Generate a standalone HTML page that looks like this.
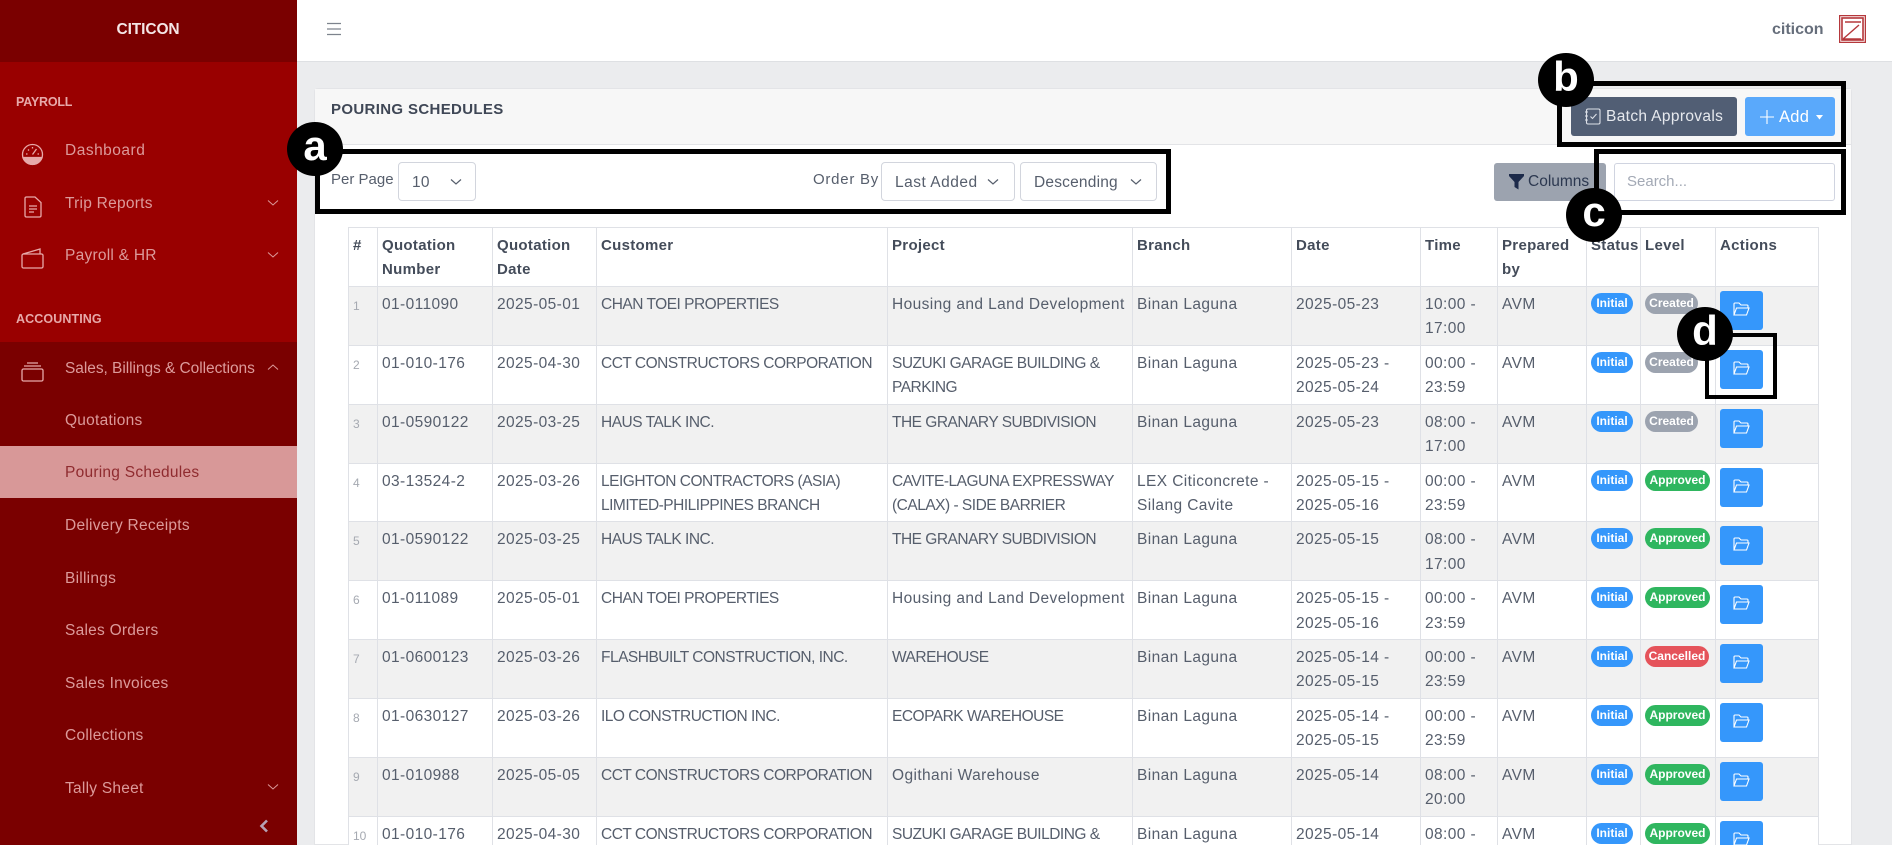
<!DOCTYPE html>
<html style="height:845px;overflow:hidden"><head><meta charset="utf-8"><title>Pouring Schedules</title>
<style>
*{box-sizing:border-box}
html,body{margin:0;padding:0}
body{width:1892px;height:845px;overflow:hidden;background:#ebecee;font-family:"Liberation Sans",sans-serif;color:#565e6c}
#wrap{position:absolute;left:0;top:0;width:1892px;height:845px;overflow:hidden;background:#ebecee}
.a{position:absolute}
.t{position:absolute;white-space:nowrap;line-height:20px}
#side{left:0;top:0;width:297px;height:845px;background:#7a0000;overflow:hidden}
.st{position:absolute;left:65px;font-size:15.5px;letter-spacing:.25px;color:#dc9a9a;line-height:20px;white-space:nowrap}
.sh{position:absolute;left:16px;font-size:12.5px;font-weight:bold;color:#e7a9a9;line-height:16px}
.chev{position:absolute;left:266px}
table{border-collapse:collapse;table-layout:fixed;width:1470px;position:absolute;left:348px;top:227px;font-size:15.5px;letter-spacing:.4px;color:#565e6c;background:#fff}
td,th{border:1px solid #dfe1e6;padding:6px 4px 0;vertical-align:top;line-height:24.4px;text-align:left;overflow:hidden}
th{height:59px;color:#444c5a;font-size:15px;letter-spacing:.3px;font-weight:bold}
td{height:58.85px}
td.u{letter-spacing:-.5px}
tr:nth-child(even) td{background:#f1f1f1}
td.n{font-size:12px;letter-spacing:0;color:#a5a9b1;padding-top:7px}
.b{display:inline-block;height:21px;line-height:20px;border-radius:11px;color:#fff;font-size:12px;letter-spacing:0;font-weight:bold;text-align:center;vertical-align:top}
.i{width:42px;background:#3597fb}.cr{width:53px;background:#9ca3af}.ap{width:65px;background:#2fb65f}.ca{width:64px;background:#e5535a}
.f{display:block;width:43px;height:39px;background:#3597fb;border-radius:3px;position:relative}
.f svg{position:absolute;left:13px;top:11px}
td.act{padding:4px 0 0 4px}
.sel{position:absolute;background:#fff;border:1px solid #d2d5dd;border-radius:4px;height:39px;font-size:15.5px;letter-spacing:.2px;line-height:40px;color:#565e6c;padding-left:13px;white-space:nowrap}
.sel svg{position:absolute;top:15px}
.bx{position:absolute;border:5px solid #000}
.c{position:absolute;background:#000;border-radius:50%;width:56px;height:54px;color:#fff;font-weight:bold;font-size:42px;text-align:center;line-height:48px}
</style></head><body>
<svg width="0" height="0" style="position:absolute"><defs><symbol id="fo" viewBox="0 0 17 15"><path d="M1 13V2Q1 1 2 1H6L8 3H14Q15 3 15 4V6M1 13L3.500 6H16L13.500 13Z" fill="none" stroke="#fff" stroke-width="1.100"/></symbol></defs></svg>
<div id="wrap">

<div class="a" style="left:297px;top:0;width:1595px;height:62px;background:#fff;border-bottom:1px solid #dee0e3"></div>
<svg class="a" style="left:327px;top:22px" width="14" height="14" fill="none" stroke="#7d838d" stroke-width="1.200"><path d="M0 1.500H14M0 7H14M0 12.500H14"/></svg>
<div class="t" style="left:1772px;top:20px;font-size:16px;font-weight:bold;color:#666e7b">citicon</div>
<svg class="a" style="left:1839px;top:15px" width="27" height="28" fill="none" stroke="#b5383c" stroke-width="1.200"><rect x=".6" y=".6" width="25.800" height="26.800" fill="#f9e9e9"/><rect x="3" y="3" width="21" height="22" fill="#fff" stroke-width="1.600"/><path d="M4 24L20 10M6 7H22M4 24H22" stroke-width="1.400"/></svg>

<div id="side" class="a">
 <div class="a" style="left:0;top:62px;width:297px;height:280px;background:#990000"></div>
 <div class="t" style="left:0;width:296px;text-align:center;top:20px;font-size:15.5px;font-weight:bold;letter-spacing:-.1px;color:#f5e6e6">CITICON</div>
 <div class="sh" style="top:94px;letter-spacing:-.2px">PAYROLL</div>
 <svg class="a" style="left:21px;top:143px" width="23" height="23" viewBox="0 0 23 23" fill="none" stroke="#e7a9a9" stroke-width="1.300"><circle cx="11.500" cy="11.500" r="10"/><path d="M2 14.500H21A10 10 0 0 1 2 14.500Z" fill="#e7a9a9"/><path d="M11.500 11.500L15.500 6M5 11H6.500M16.500 11H18M7 6.500L8 7.500M11.500 4V5.500"/></svg>
 <div class="st" style="top:141px;letter-spacing:.5px">Dashboard</div>
 <svg class="a" style="left:24px;top:196px" width="18" height="22" viewBox="0 0 18 22" fill="none" stroke="#e7a9a9" stroke-width="1.300"><path d="M1 2.500Q1 1 2.500 1H11L17 6.500V19.500Q17 21 15.500 21H2.500Q1 21 1 19.500Z"/><path d="M5 10H13M5 13H13M5 16H10"/></svg>
 <div class="st" style="top:194px">Trip Reports</div>
 <svg class="chev" style="top:199px" width="14" height="8" fill="none" stroke="#dc9a9a" stroke-width="1"><path d="M2 1.500L7 6L12 1.500"/></svg>
 <svg class="a" style="left:21px;top:248px" width="23" height="21" viewBox="0 0 23 21" fill="none" stroke="#e7a9a9" stroke-width="1.300"><rect x="1" y="6" width="21" height="14" rx="1.500"/><path d="M2 6L19 1V6"/></svg>
 <div class="st" style="top:246px">Payroll &amp; HR</div>
 <svg class="chev" style="top:251px" width="14" height="8" fill="none" stroke="#dc9a9a" stroke-width="1"><path d="M2 1.500L7 6L12 1.500"/></svg>
 <div class="sh" style="top:311px;letter-spacing:.1px">ACCOUNTING</div>
 <svg class="a" style="left:21px;top:361px" width="23" height="21" viewBox="0 0 23 21" fill="none" stroke="#e7a9a9" stroke-width="1.300"><rect x="1" y="8" width="21" height="12" rx="1.500"/><path d="M3 5H20M6 2H17"/></svg>
 <div class="st" style="top:359px;letter-spacing:-.05px">Sales, Billings &amp; Collections</div>
 <svg class="chev" style="top:363px" width="14" height="8" fill="none" stroke="#dc9a9a" stroke-width="1"><path d="M2 6.500L7 2L12 6.500"/></svg>
 <div class="st" style="top:411px">Quotations</div>
 <div class="a" style="left:0;top:446px;width:297px;height:52px;background:#d89898"></div>
 <div class="st" style="top:463px;color:#8f2b2f">Pouring Schedules</div>
 <div class="st" style="top:516px">Delivery Receipts</div>
 <div class="st" style="top:569px">Billings</div>
 <div class="st" style="top:621px">Sales Orders</div>
 <div class="st" style="top:674px">Sales Invoices</div>
 <div class="st" style="top:726px">Collections</div>
 <div class="st" style="top:779px">Tally Sheet</div>
 <svg class="chev" style="top:783px" width="14" height="8" fill="none" stroke="#dc9a9a" stroke-width="1"><path d="M2 1.500L7 6L12 1.500"/></svg>
 <svg class="a" style="left:259px;top:819px" width="10" height="14" fill="none" stroke="#b6a2b5" stroke-width="2.600"><path d="M8 1.500L2.500 7L8 12.500"/></svg>
</div>

<div class="a" style="left:314px;top:88px;width:1538px;height:757px;background:#fff;border:1px solid #e3e4e7;border-radius:4px 4px 0 0"></div>
<div class="a" style="left:315px;top:89px;width:1536px;height:56px;background:#f7f7f7;border-bottom:1px solid #e3e4e7"></div>
<div class="t" style="left:331px;top:100px;font-size:15px;letter-spacing:.35px;font-weight:bold;color:#3f4756">POURING SCHEDULES</div>

<div class="a" style="left:1571px;top:97px;width:166px;height:39px;background:#515e74;border-radius:3px"></div>
<svg class="a" style="left:1584px;top:108px" width="17" height="17" viewBox="0 0 17 17" fill="none" stroke="#dde1e8" stroke-width="1.100"><rect x="2.500" y="1" width="13.500" height="15" rx="1.500"/><path d="M1 4H4M1 8H4M1 12H4M6.500 8.500L8.500 10.500L12.500 6"/></svg>
<div class="t" style="left:1606px;top:107px;font-size:15.500px;letter-spacing:.35px;color:#e6e9ee">Batch Approvals</div>
<div class="a" style="left:1745px;top:97px;width:90px;height:39px;background:#5aa9fb;border-radius:3px"></div>
<svg class="a" style="left:1760px;top:110px" width="14" height="14" stroke="#fff" stroke-width="1.100"><path d="M7 0V14M0 7H14"/></svg>
<div class="t" style="left:1779px;top:107px;font-size:16.500px;letter-spacing:.3px;color:#fff">Add</div>
<svg class="a" style="left:1815px;top:115px" width="9" height="5" fill="#fff"><path d="M1 0H8L4.500 4.500Z"/></svg>

<div class="t" style="left:331px;top:170px;font-size:15px;color:#565e6c">Per Page</div>
<div class="sel" style="left:398px;top:162px;width:78px">10<svg style="left:51px" width="12" height="8" fill="none" stroke="#565e6c" stroke-width="1.200"><path d="M1 1.500L6 6L11 1.500"/></svg></div>
<div class="t" style="left:813px;top:170px;font-size:15px;letter-spacing:.75px;color:#565e6c">Order By</div>
<div class="sel" style="left:881px;top:162px;width:134px;letter-spacing:.5px">Last Added<svg style="left:105px" width="12" height="8" fill="none" stroke="#565e6c" stroke-width="1.200"><path d="M1 1.500L6 6L11 1.500"/></svg></div>
<div class="sel" style="left:1020px;top:162px;width:137px">Descending<svg style="left:109px" width="12" height="8" fill="none" stroke="#565e6c" stroke-width="1.200"><path d="M1 1.500L6 6L11 1.500"/></svg></div>

<div class="a" style="left:1494px;top:163px;width:112px;height:38px;background:#9ca3af;border-radius:3px"></div>
<svg class="a" style="left:1509px;top:174px" width="15" height="16" fill="#1c2a4a"><path d="M0 0H15V2L9.500 8V15.500L5.500 13V8L0 2Z"/></svg>
<div class="t" style="left:1528px;top:172px;font-size:15.500px;color:#2c3850">Columns</div>
<div class="a" style="left:1614px;top:163px;width:221px;height:38px;background:#fff;border:1px solid #d0d4e0;border-radius:3px"></div>
<div class="t" style="left:1627px;top:172px;font-size:15px;color:#a3a9b5">Search...</div>

<table>
<colgroup><col style="width:29px"><col style="width:115px"><col style="width:104px"><col style="width:291px"><col style="width:245px"><col style="width:159px"><col style="width:129px"><col style="width:77px"><col style="width:89px"><col style="width:54px"><col style="width:75px"><col style="width:103px"></colgroup>
<tr><th>#</th><th>Quotation Number</th><th>Quotation Date</th><th>Customer</th><th>Project</th><th>Branch</th><th>Date</th><th>Time</th><th>Prepared by</th><th>Status</th><th>Level</th><th>Actions</th></tr>
<tr><td class="n">1</td><td>01-011090</td><td>2025-05-01</td><td class="u">CHAN TOEI PROPERTIES</td><td>Housing and Land Development</td><td>Binan Laguna</td><td>2025-05-23</td><td>10:00 - 17:00</td><td>AVM</td><td><span class="b i">Initial</span></td><td><span class="b cr">Created</span></td><td class="act"><a class="f"><svg width="17" height="15"><use href="#fo"/></svg></a></td></tr>
<tr><td class="n">2</td><td>01-010-176</td><td>2025-04-30</td><td class="u">CCT CONSTRUCTORS CORPORATION</td><td class="u">SUZUKI GARAGE BUILDING &amp; PARKING</td><td>Binan Laguna</td><td>2025-05-23 - 2025-05-24</td><td>00:00 - 23:59</td><td>AVM</td><td><span class="b i">Initial</span></td><td><span class="b cr">Created</span></td><td class="act"><a class="f"><svg width="17" height="15"><use href="#fo"/></svg></a></td></tr>
<tr><td class="n">3</td><td>01-0590122</td><td>2025-03-25</td><td class="u">HAUS TALK INC.</td><td class="u">THE GRANARY SUBDIVISION</td><td>Binan Laguna</td><td>2025-05-23</td><td>08:00 - 17:00</td><td>AVM</td><td><span class="b i">Initial</span></td><td><span class="b cr">Created</span></td><td class="act"><a class="f"><svg width="17" height="15"><use href="#fo"/></svg></a></td></tr>
<tr><td class="n">4</td><td>03-13524-2</td><td>2025-03-26</td><td class="u">LEIGHTON CONTRACTORS (ASIA) LIMITED-PHILIPPINES BRANCH</td><td class="u">CAVITE-LAGUNA EXPRESSWAY (CALAX) - SIDE BARRIER</td><td>LEX Citiconcrete - Silang Cavite</td><td>2025-05-15 - 2025-05-16</td><td>00:00 - 23:59</td><td>AVM</td><td><span class="b i">Initial</span></td><td><span class="b ap">Approved</span></td><td class="act"><a class="f"><svg width="17" height="15"><use href="#fo"/></svg></a></td></tr>
<tr><td class="n">5</td><td>01-0590122</td><td>2025-03-25</td><td class="u">HAUS TALK INC.</td><td class="u">THE GRANARY SUBDIVISION</td><td>Binan Laguna</td><td>2025-05-15</td><td>08:00 - 17:00</td><td>AVM</td><td><span class="b i">Initial</span></td><td><span class="b ap">Approved</span></td><td class="act"><a class="f"><svg width="17" height="15"><use href="#fo"/></svg></a></td></tr>
<tr><td class="n">6</td><td>01-011089</td><td>2025-05-01</td><td class="u">CHAN TOEI PROPERTIES</td><td>Housing and Land Development</td><td>Binan Laguna</td><td>2025-05-15 - 2025-05-16</td><td>00:00 - 23:59</td><td>AVM</td><td><span class="b i">Initial</span></td><td><span class="b ap">Approved</span></td><td class="act"><a class="f"><svg width="17" height="15"><use href="#fo"/></svg></a></td></tr>
<tr><td class="n">7</td><td>01-0600123</td><td>2025-03-26</td><td class="u">FLASHBUILT CONSTRUCTION, INC.</td><td class="u">WAREHOUSE</td><td>Binan Laguna</td><td>2025-05-14 - 2025-05-15</td><td>00:00 - 23:59</td><td>AVM</td><td><span class="b i">Initial</span></td><td><span class="b ca">Cancelled</span></td><td class="act"><a class="f"><svg width="17" height="15"><use href="#fo"/></svg></a></td></tr>
<tr><td class="n">8</td><td>01-0630127</td><td>2025-03-26</td><td class="u">ILO CONSTRUCTION INC.</td><td class="u">ECOPARK WAREHOUSE</td><td>Binan Laguna</td><td>2025-05-14 - 2025-05-15</td><td>00:00 - 23:59</td><td>AVM</td><td><span class="b i">Initial</span></td><td><span class="b ap">Approved</span></td><td class="act"><a class="f"><svg width="17" height="15"><use href="#fo"/></svg></a></td></tr>
<tr><td class="n">9</td><td>01-010988</td><td>2025-05-05</td><td class="u">CCT CONSTRUCTORS CORPORATION</td><td>Ogithani Warehouse</td><td>Binan Laguna</td><td>2025-05-14</td><td>08:00 - 20:00</td><td>AVM</td><td><span class="b i">Initial</span></td><td><span class="b ap">Approved</span></td><td class="act"><a class="f"><svg width="17" height="15"><use href="#fo"/></svg></a></td></tr>
<tr><td class="n">10</td><td>01-010-176</td><td>2025-04-30</td><td class="u">CCT CONSTRUCTORS CORPORATION</td><td class="u">SUZUKI GARAGE BUILDING &amp; PARKING</td><td>Binan Laguna</td><td>2025-05-14</td><td>08:00 - 20:00</td><td>AVM</td><td><span class="b i">Initial</span></td><td><span class="b ap">Approved</span></td><td class="act"><a class="f"><svg width="17" height="15"><use href="#fo"/></svg></a></td></tr>
</table>

<div class="bx" style="left:315px;top:149px;width:856px;height:65px"></div>
<div class="c" style="left:287px;top:122px">a</div>
<div class="bx" style="left:1557px;top:81px;width:289px;height:66px"></div>
<div class="c" style="left:1538px;top:53px">b</div>
<div class="bx" style="left:1594px;top:149px;width:252px;height:66px"></div>
<div class="c" style="left:1566px;top:188px">c</div>
<div class="bx" style="left:1705px;top:333px;width:72px;height:66px;border-width:4px"></div>
<div class="c" style="left:1677px;top:307px">d</div>
</div>
</body></html>
